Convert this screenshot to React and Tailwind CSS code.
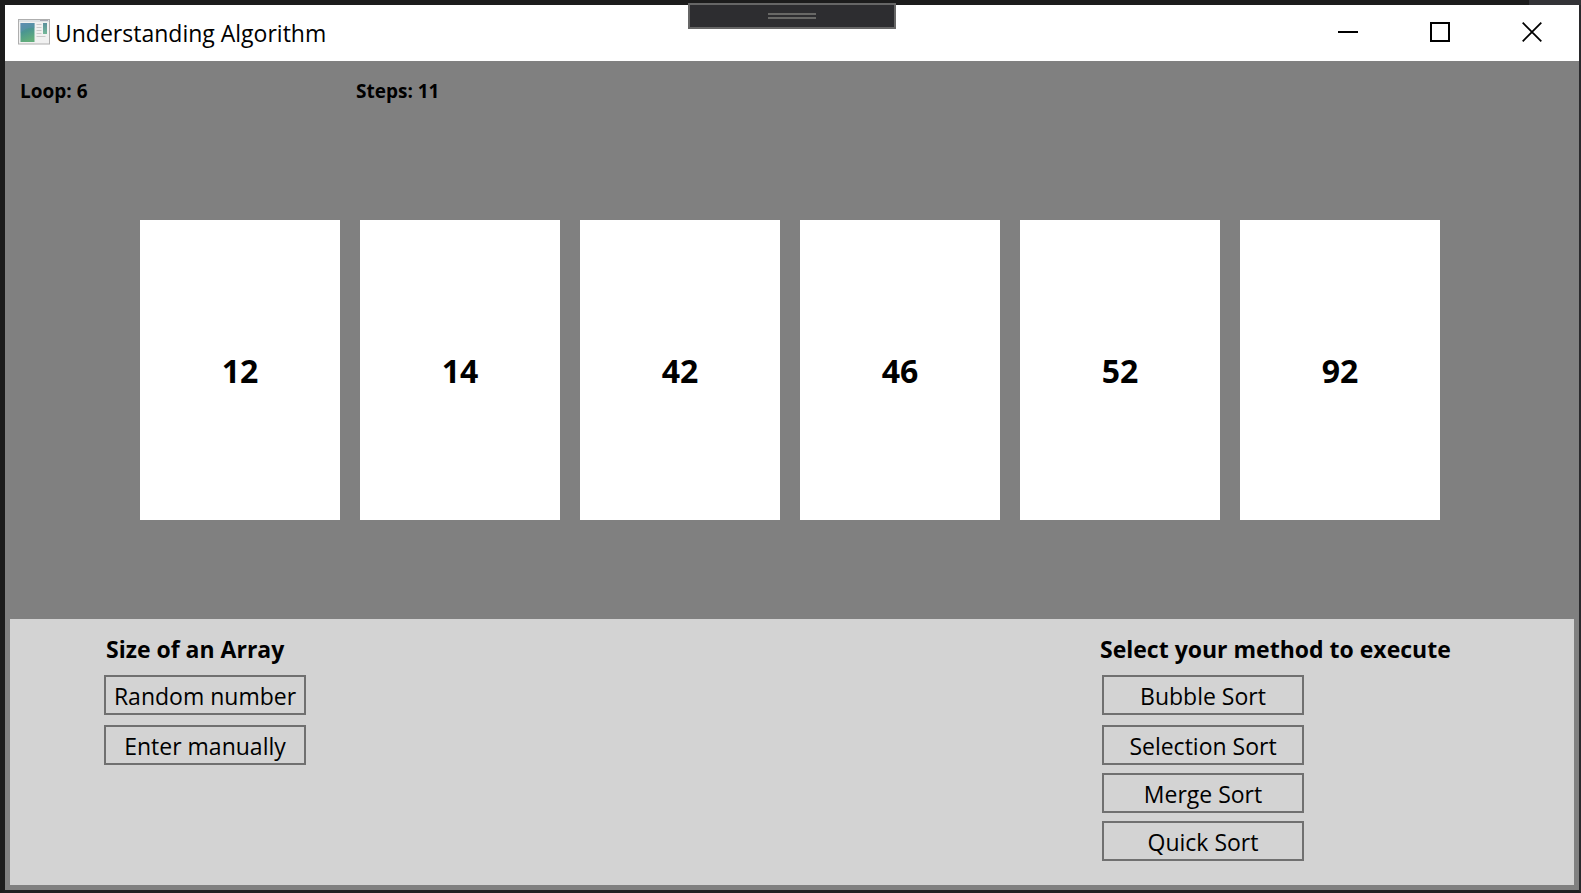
import React from "react";

const values = [12, 14, 42, 46, 52, 92];

function AppIcon() {
  return (
    <svg width="32" height="26" viewBox="0 0 32 26" aria-hidden="true">
      <defs>
        <linearGradient id="pane" x1="0" y1="0" x2="0.3" y2="1">
          <stop offset="0" stopColor="#5f8cad" />
          <stop offset="0.5" stopColor="#4a9690" />
          <stop offset="1" stopColor="#62ad7c" />
        </linearGradient>
        <linearGradient id="bar" x1="0" y1="0" x2="0" y2="1">
          <stop offset="0" stopColor="#5a8f9c" />
          <stop offset="1" stopColor="#74b898" />
        </linearGradient>
      </defs>
      <rect x="0.5" y="0.5" width="31" height="24.5" fill="#f1f1f1" stroke="#aeaeae" />
      <rect x="1" y="1" width="30" height="2" fill="#dde1e4" />
      <path d="M22 1.500h8" stroke="#a9a9b4" />
      <rect x="2.5" y="4" width="14" height="19" fill="url(#pane)" />
      <path d="M2.5 14 Q8 8 16.500 9 V4 H2.5 Z" fill="#5f8fb8" opacity="0.4" />
      <path d="M18.500 5.500h5M18.500 8.500h5M18.500 11.500h5M18.500 14.500h5M18.500 17.500h9" stroke="#cacaca" strokeWidth="1" />
      <rect x="25" y="4" width="4" height="11" fill="url(#bar)" />
    </svg>
  );
}

function TitleBar() {
  const control = "flex w-[92px] items-center justify-center";
  return (
    <header className="flex h-14 items-stretch justify-between bg-white pb-0.5">
      <div className="flex items-center gap-[5px] pl-[13px]">
        <AppIcon />
        <h1 className="pt-0.5 text-[23px] leading-8">Understanding Algorithm</h1>
      </div>
      <div className="flex pr-px">
        <button type="button" aria-label="Minimize" className={control}>
          <svg width="20" height="20" viewBox="0 0 20 20"><path d="M0 10H20" stroke="#000" strokeWidth="2" /></svg>
        </button>
        <button type="button" aria-label="Maximize" className={control}>
          <svg width="20" height="20" viewBox="0 0 20 20"><rect x="1" y="1" width="18" height="18" fill="none" stroke="#000" strokeWidth="2" /></svg>
        </button>
        <button type="button" aria-label="Close" className={control}>
          <svg width="20" height="20" viewBox="0 0 20 20"><path d="M0.700 0.700L19.300 19.300M19.300 0.700L0.700 19.300" stroke="#000" strokeWidth="1.800" /></svg>
        </button>
      </div>
    </header>
  );
}

function ActionButton({ children }) {
  return (
    <button type="button" className="flex h-10 w-[202px] items-center justify-center border-2 border-[#707070] pt-0.5 text-[23px] leading-8 whitespace-nowrap">
      {children}
    </button>
  );
}

export default function App() {
  return (
    <div className="relative flex min-h-screen flex-col border-t-[5px] border-r-2 border-b-[3px] border-l-[5px] border-t-[#1c1c1c] border-r-[#29292c] border-b-[#1f1f21] border-l-[#1c1c1c] bg-[#808080] font-['Open_Sans','Noto_Sans',sans-serif] text-black">
      <div className="absolute -top-[5px] -right-0.5 h-[5px] w-[52px] bg-[#333337]" />
      <button
        type="button"
        aria-label="Debug toolbar"
        className="absolute -top-0.5 left-[683px] flex h-[26px] w-52 flex-col items-center gap-0.5 border-2 border-[#666666] bg-[#2d2d30] pt-2"
      >
        <span className="h-0.5 w-12 bg-[#686866]" />
        <span className="h-0.5 w-12 bg-[#686866]" />
      </button>
      <TitleBar />
      <main className="flex grow flex-col p-[5px]">
        <div className="flex pt-3 pl-2.5 text-[19px] leading-[26px] font-bold">
          <p className="w-[336px]">Loop: 6</p>
          <p>Steps: 11</p>
        </div>
        <ol className="flex grow items-center justify-center gap-5 pt-4 pr-1">
          {values.map((value) => (
            <li key={value} className="flex h-[300px] w-[200px] items-center justify-center bg-white pt-0.5 text-[32px] leading-10 font-bold">
              {value}
            </li>
          ))}
        </ol>
        <div className="flex justify-between bg-[#d3d3d3] pt-3.5 pb-6 pl-[94px]">
          <section>
            <h2 className="pb-2.5 pl-0.5 text-[23px] leading-8 font-bold">Size of an Array</h2>
            <div className="flex flex-col gap-2.5">
              <ActionButton>Random number</ActionButton>
              <ActionButton>Enter manually</ActionButton>
            </div>
          </section>
          <section className="w-[474px]">
            <h2 className="pb-2.5 text-[23px] leading-8 font-bold">Select your method to execute</h2>
            <div className="flex flex-col gap-2 pl-0.5">
              <div className="pb-0.5">
                <ActionButton>Bubble Sort</ActionButton>
              </div>
              <ActionButton>Selection Sort</ActionButton>
              <ActionButton>Merge Sort</ActionButton>
              <ActionButton>Quick Sort</ActionButton>
            </div>
          </section>
        </div>
      </main>
    </div>
  );
}
